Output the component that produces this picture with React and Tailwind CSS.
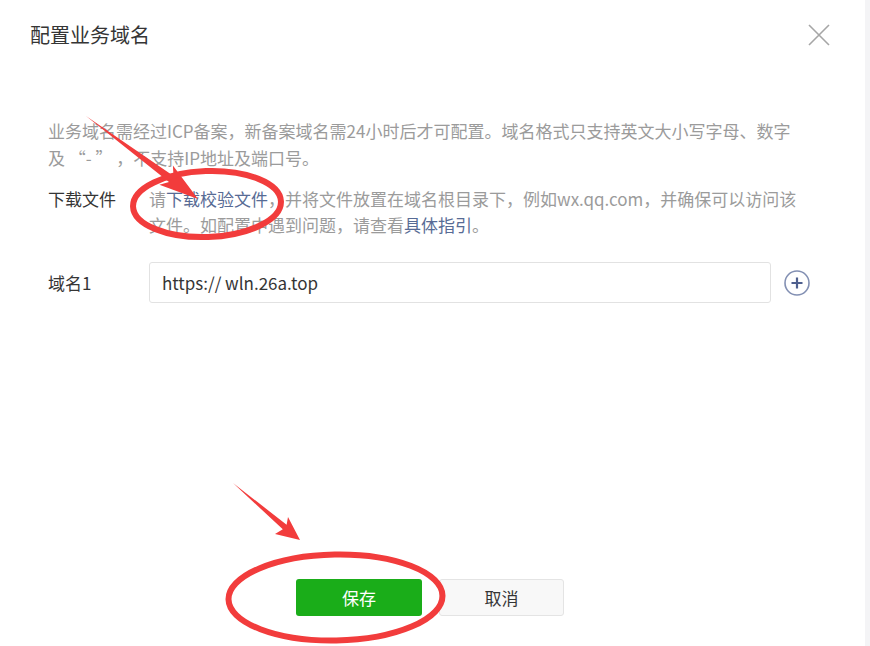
import React from 'react';

function CloseIcon() {
  return (
    <svg width="22" height="22" viewBox="0 0 22 22" className="block">
      <path d="M1 1L21 21M21 1L1 21" stroke="#a6a6a6" strokeWidth="1.6" fill="none" />
    </svg>
  );
}

function PlusCircle() {
  return (
    <svg width="26" height="26" viewBox="0 0 26 26" className="block">
      <circle cx="13" cy="13" r="12" stroke="#8390b3" strokeWidth="1.6" fill="none" />
      <path d="M13 7.5V18.5M7.5 13H18.5" stroke="#4e5f8e" strokeWidth="2.2" fill="none" />
    </svg>
  );
}

function Annotations() {
  return (
    <svg
      className="pointer-events-none absolute left-0 top-0"
      width="870"
      height="646"
      viewBox="0 0 870 646"
    >
      <g fill="#f23c3c">
        <polygon points="86,116 173.5,176 172.9,165.6 198,199 159.4,184.7 169,182" />
        <polygon points="233,483 286.6,524.7 288,517 300,540 275,534 282.8,529.3" />
      </g>
      <g fill="none" stroke="#f23c3c" strokeWidth="6">
        <ellipse cx="207" cy="204" rx="74" ry="33" transform="rotate(-2 207 204)" />
        <ellipse cx="335.5" cy="597.5" rx="107" ry="43" transform="rotate(-1 335.5 597.5)" />
      </g>
    </svg>
  );
}

export default function App() {
  return (
    <div className="relative flex h-[646px] w-[870px] bg-white font-['Noto_Sans_CJK_SC',sans-serif]">
      <div className="flex flex-1 flex-col">
        <div className="flex h-[70px] items-center justify-between pl-[30px] pr-[35px]">
          <h1 className="text-[20px] font-normal text-[#353535]">配置业务域名</h1>
          <CloseIcon />
        </div>

        <div className="flex-1 pl-[48px] pt-[47px] text-[17px]">
          <p className="leading-[27px] text-[#9b9b9b]">
            业务域名需经过ICP备案，新备案域名需24小时后才可配置。域名格式只支持英文大小写字母、数字
            <br />
            及 “- ” ，不支持IP地址及端口号。
          </p>

          <div className="mt-[15px] flex leading-[26px]">
            <div className="w-[101px] shrink-0 text-[#353535]">下载文件</div>
            <p className="text-[#9b9b9b]">
              请<span className="text-[#576b95]">下载校验文件</span>，并将文件放置在域名根目录下，例如wx.qq.com，并确保可以访问该
              <br />
              文件。如配置中遇到问题，请查看<span className="text-[#576b95]">具体指引</span>。
            </p>
          </div>

          <div className="mt-[24px] flex items-center">
            <div className="w-[101px] shrink-0 text-[#353535]">域名1</div>
            <div className="flex h-[41px] w-[622px] items-center rounded-[3px] border border-[#e2e2e2] px-[12px] text-[#353535]">
              https:// wln.26a.top
            </div>
            <div className="ml-[13px]">
              <PlusCircle />
            </div>
          </div>
        </div>

        <div className="flex justify-center gap-[17px] pb-[30px] pr-[5px] text-[17px]">
          <button className="h-[37px] w-[126px] rounded-[3px] bg-[#1aad19] text-white">保存</button>
          <button className="h-[37px] w-[125px] rounded-[3px] border border-[#e4e4e4] bg-[#f8f8f8] text-[#353535]">
            取消
          </button>
        </div>
      </div>
      <div className="w-[5px] bg-[#f4f4f6]" />
      <Annotations />
    </div>
  );
}
